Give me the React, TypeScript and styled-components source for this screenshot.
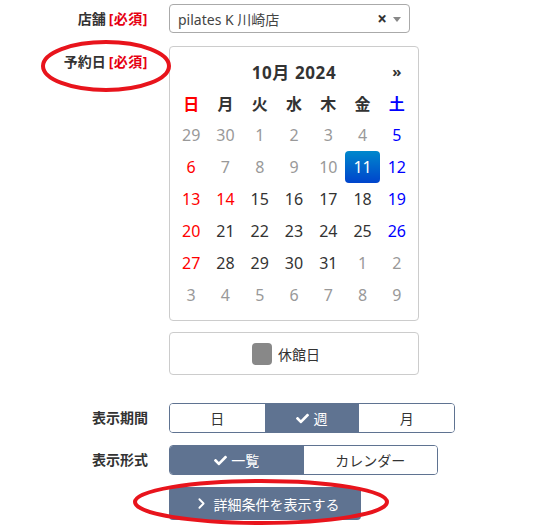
import React from 'react';
import styled, { createGlobalStyle } from 'styled-components';
import { FaCheck } from 'react-icons/fa';
import { ChevronRight } from 'lucide-react';

const GlobalStyle = createGlobalStyle`
  html, body { margin: 0; padding: 0; background: #fff; }
  body {
    font-family: "Noto Sans", "Noto Sans CJK JP", sans-serif;
    color: #333;
  }
`;

const Page = styled.div`
  position: relative;
  width: 553px;
  height: 530px;
  overflow: hidden;
  padding-top: 4px;
  box-sizing: border-box;
`;

const Row = styled.div<{ $mt: number; $align?: string }>`
  display: grid;
  grid-template-columns: 148px auto;
  column-gap: 21px;
  align-items: ${(p) => p.$align ?? 'center'};
  margin-top: ${(p) => p.$mt}px;
`;

const Label = styled.div<{ $pt?: number }>`
  text-align: right;
  font-weight: bold;
  font-size: 14px;
  line-height: 20px;
  color: #333;
  white-space: nowrap;
  padding-top: ${(p) => p.$pt ?? 0}px;
`;

const Req = styled.span`
  color: #e60012;
  margin-left: 3px;
  letter-spacing: 0.5px;
`;

const Select = styled.div`
  width: 241px;
  height: 29px;
  box-sizing: border-box;
  border: 1px solid #aaa;
  border-radius: 4px;
  display: flex;
  align-items: center;
  padding: 0 8px 0 8px;
  font-size: 14px;
  color: #444;
`;

const SelectText = styled.span`
  flex: 1;
`;

const ClearX = styled.span`
  font-size: 17px;
  font-weight: bold;
  color: #333;
  margin-right: 6px;
  line-height: 1;
`;

const Arrow = styled.span`
  width: 0;
  height: 0;
  border-left: 4px solid transparent;
  border-right: 4px solid transparent;
  border-top: 5px solid #888;
  margin-top: 1px;
`;

const Calendar = styled.div`
  width: 250px;
  box-sizing: border-box;
  border: 1px solid #ccc;
  border-radius: 4px;
  padding: 8px 4px 9px;
`;

const Grid = styled.div`
  display: grid;
  grid-template-columns: repeat(7, 1fr);
  grid-auto-rows: 32px;
  width: 240px;
`;

const Title = styled.div`
  grid-column: 2 / 7;
  display: flex;
  align-items: center;
  justify-content: center;
  font-weight: bold;
  font-size: 17px;
  letter-spacing: 0.6px;
  color: #333;
`;

const Nav = styled.div<{ $col: number }>`
  grid-column: ${(p) => p.$col};
  display: flex;
  align-items: center;
  justify-content: center;
  font-weight: bold;
  font-size: 15px;
  color: #333;
`;

type Tone = 'normal' | 'muted' | 'sun' | 'sat' | 'active';

const toneColor: Record<Tone, string> = {
  normal: '#333',
  muted: '#999',
  sun: '#ff0000',
  sat: '#0000ff',
  active: '#fff',
};

const Cell = styled.div<{ $tone: Tone; $bold?: boolean }>`
  display: flex;
  align-items: center;
  justify-content: center;
  font-size: 16px;
  font-weight: ${(p) => (p.$bold ? 'bold' : 'normal')};
  color: ${(p) => toneColor[p.$tone]};
  border-radius: 4px;
  background: ${(p) =>
    p.$tone === 'active' ? 'linear-gradient(to bottom, #0088cc, #0044cc)' : 'transparent'};
`;

const Legend = styled.div`
  width: 250px;
  height: 43px;
  box-sizing: border-box;
  border: 1px solid #ccc;
  border-radius: 4px;
  display: flex;
  align-items: center;
  justify-content: center;
  gap: 6px;
  padding-right: 16px;
  font-size: 14px;
  color: #333;
`;

const Swatch = styled.span`
  width: 20px;
  height: 22px;
  border-radius: 4px;
  background: #888;
`;

const Segments = styled.div<{ $w: number; $n: number }>`
  width: ${(p) => p.$w}px;
  height: 30px;
  box-sizing: border-box;
  border: 1px solid #5f7391;
  border-radius: 4px;
  overflow: hidden;
  display: grid;
  grid-template-columns: repeat(${(p) => p.$n}, 1fr);
`;

const Segment = styled.div<{ $on?: boolean }>`
  display: flex;
  align-items: center;
  justify-content: center;
  gap: 4px;
  font-size: 14px;
  color: ${(p) => (p.$on ? '#fff' : '#333')};
  background: ${(p) => (p.$on ? '#5f7391' : '#fff')};
  svg {
    font-size: 13px;
  }
`;

const DetailButton = styled.div`
  width: 192px;
  height: 33px;
  box-sizing: border-box;
  border-radius: 4px;
  background: #5f7391;
  color: #fff;
  font-size: 14px;
  display: flex;
  align-items: center;
  justify-content: center;
  gap: 4px;
  padding-left: 2px;
`;

const Marks = styled.svg`
  position: absolute;
  left: 0;
  top: 0;
  pointer-events: none;
`;

const weekdays: { t: string; tone: Tone }[] = [
  { t: '日', tone: 'sun' },
  { t: '月', tone: 'normal' },
  { t: '火', tone: 'normal' },
  { t: '水', tone: 'normal' },
  { t: '木', tone: 'normal' },
  { t: '金', tone: 'normal' },
  { t: '土', tone: 'sat' },
];

const days: [number, Tone][] = [
  [29, 'muted'], [30, 'muted'], [1, 'muted'], [2, 'muted'], [3, 'muted'], [4, 'muted'], [5, 'sat'],
  [6, 'sun'], [7, 'muted'], [8, 'muted'], [9, 'muted'], [10, 'muted'], [11, 'active'], [12, 'sat'],
  [13, 'sun'], [14, 'sun'], [15, 'normal'], [16, 'normal'], [17, 'normal'], [18, 'normal'], [19, 'sat'],
  [20, 'sun'], [21, 'normal'], [22, 'normal'], [23, 'normal'], [24, 'normal'], [25, 'normal'], [26, 'sat'],
  [27, 'sun'], [28, 'normal'], [29, 'normal'], [30, 'normal'], [31, 'normal'], [1, 'muted'], [2, 'muted'],
  [3, 'muted'], [4, 'muted'], [5, 'muted'], [6, 'muted'], [7, 'muted'], [8, 'muted'], [9, 'muted'],
];

export default function App() {
  return (
    <>
      <GlobalStyle />
      <Page>
        <Row $mt={0}>
          <Label>
            店舗<Req>[必須]</Req>
          </Label>
          <Select>
            <SelectText>pilates K 川崎店</SelectText>
            <ClearX>×</ClearX>
            <Arrow />
          </Select>
        </Row>

        <Row $mt={13} $align="start">
          <Label $pt={6}>
            予約日<Req>[必須]</Req>
          </Label>
          <Calendar>
            <Grid>
              <Title>10月 2024</Title>
              <Nav $col={7}>»</Nav>
              {weekdays.map((w) => (
                <Cell key={w.t} $tone={w.tone} $bold>
                  {w.t}
                </Cell>
              ))}
              {days.map(([d, tone], i) => (
                <Cell key={i} $tone={tone}>
                  {d}
                </Cell>
              ))}
            </Grid>
          </Calendar>
        </Row>

        <Row $mt={11}>
          <span />
          <Legend>
            <Swatch />
            休館日
          </Legend>
        </Row>

        <Row $mt={28}>
          <Label>表示期間</Label>
          <Segments $w={286} $n={3}>
            <Segment>日</Segment>
            <Segment $on>
              <FaCheck />週
            </Segment>
            <Segment>月</Segment>
          </Segments>
        </Row>

        <Row $mt={12}>
          <Label>表示形式</Label>
          <Segments $w={269} $n={2}>
            <Segment $on>
              <FaCheck />一覧
            </Segment>
            <Segment>カレンダー</Segment>
          </Segments>
        </Row>

        <Row $mt={12}>
          <span />
          <DetailButton>
            <ChevronRight size={17} strokeWidth={2.6} />
            詳細条件を表示する
          </DetailButton>
        </Row>

        <Marks width={553} height={530} viewBox="0 0 553 530">
          <ellipse cx={106} cy={66} rx={63} ry={24} fill="none" stroke="#e8141c" strokeWidth={4} />
          <ellipse cx={261} cy={502} rx={126} ry={21} fill="none" stroke="#e8141c" strokeWidth={4} />
        </Marks>
      </Page>
    </>
  );
}
